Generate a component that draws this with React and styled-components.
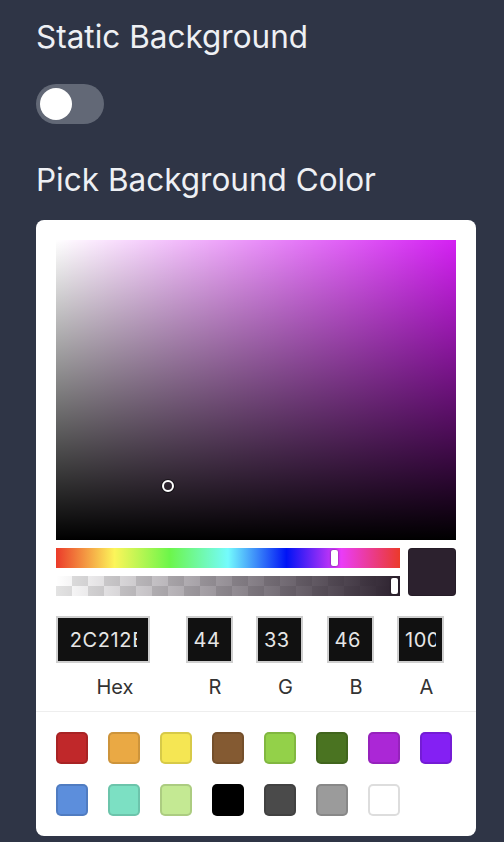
import * as React from 'react'
import styled, { createGlobalStyle } from 'styled-components'

const GlobalStyle = createGlobalStyle`
    html, body {
        margin: 0;
        background-color: #2f3546;
    }
    body {
        font-family: Inter, "Noto Sans", sans-serif;
    }
`;

const Page = styled.div`
    min-height: 842px;
    padding: 19px 28px 0 36px;
    box-sizing: border-box;
    background-color: #2f3546;
`;
const Heading = styled.h3`
    color: #eef0f4;
    font-size: 31.5px;
    font-weight: 400;
    line-height: 36px;
    margin: 0;
    margin-top: ${props => props.gap || 0}px;
`;
const Toggle = styled.div`
    width: 68px;
    height: 40px;
    border-radius: 20px;
    background-color: #626876;
    margin-top: 29px;
    display: flex;
    align-items: center;
    padding: 0 4px;
    box-sizing: border-box;
    justify-content: ${props => props.on ? 'flex-end' : 'flex-start'};
`;
const Knob = styled.div`
    width: 32px;
    height: 32px;
    border-radius: 50%;
    background-color: #fff;
`;

const Card = styled.div`
    margin-top: 22px;
    width: 440px;
    background-color: #fff;
    border-radius: 8px;
    overflow: hidden;
`;
const PickerBody = styled.div`
    padding: 20px 20px 12px;
`;
const Saturation = styled.div`
    position: relative;
    height: 300px;
    background:
        linear-gradient(to top, #000, rgba(0, 0, 0, 0)),
        linear-gradient(to right, #fff, rgba(255, 255, 255, 0)),
        ${props => `hsl(${props.hue}, 90%, 54%)`};
`;
const SatPointer = styled.div`
    position: absolute;
    width: 8px;
    height: 8px;
    border: 2px solid #fff;
    border-radius: 50%;
    box-shadow: 0 0 0 1px rgba(0, 0, 0, 0.5);
    transform: translate(-6px, -6px);
`;
const SliderRow = styled.div`
    display: flex;
    gap: 8px;
    margin-top: 8px;
`;
const Sliders = styled.div`
    flex: 1;
    display: flex;
    flex-direction: column;
    gap: 8px;
`;
const HueBar = styled.div`
    position: relative;
    height: 20px;
    background: linear-gradient(to right,
        #eb3a2a 0%, #fcf55a 17%, #6cf64a 33%, #74fbfd 50%, #0013f5 67%, #ea3cf7 83%, #eb3a2a 100%);
`;
const AlphaBar = styled.div`
    position: relative;
    height: 20px;
    background:
        linear-gradient(to right, rgba(44, 33, 46, 0), rgba(44, 33, 46, 1)),
        conic-gradient(#e3e3e3 25%, #fff 0 50%, #e3e3e3 0 75%, #fff 0) 0 0 / 32px 20px;
`;
const SliderPointer = styled.div`
    position: absolute;
    top: 2px;
    width: 7px;
    height: 16px;
    border-radius: 2px;
    background-color: #fff;
    box-shadow: 0 0 2px rgba(0, 0, 0, 0.6);
    transform: translateX(-3px);
`;
const Preview = styled.div`
    width: 48px;
    height: 48px;
    border-radius: 4px;
    background-color: ${props => props.color};
    box-shadow: inset 0 0 0 1px rgba(0, 0, 0, 0.15);
`;

const Fields = styled.div`
    display: grid;
    grid-template-columns: 2fr 1fr 1fr 1fr 1fr;
    column-gap: 11.5px;
    margin-top: 20px;
`;
const Field = styled.label`
    display: flex;
    flex-direction: column;
    align-items: center;
`;
const FieldInput = styled.input`
    align-self: flex-start;
    width: 80%;
    height: 47px;
    box-sizing: border-box;
    border: 2px solid #cfcfcf;
    background-color: #111;
    color: #e6e6e6;
    font-family: Inter, "Noto Sans", sans-serif;
    font-size: 20px;
    letter-spacing: 0.6px;
    padding: 0 10%;
    outline: none;
    border-radius: 0;
`;
const FieldLabel = styled.span`
    color: #333;
    font-size: 20px;
    line-height: 24px;
    margin-top: 12px;
`;

const Presets = styled.div`
    border-top: 1px solid #eee;
    padding: 20px;
    display: grid;
    grid-template-columns: repeat(8, 32px);
    gap: 20px;
`;
const Swatch = styled.div`
    width: 32px;
    height: 32px;
    border-radius: 5px;
    background-color: ${props => props.color};
    box-shadow: inset 0 0 0 2px ${props => props.color === '#FFFFFF' ? '#dddddd' : 'rgba(0, 0, 0, 0.12)'};
`;

const presetColors = [
    '#C0282A', '#EAA944', '#F5E653', '#845A32', '#93D149', '#4A7321', '#AB27D6', '#8420F3',
    '#5C8EDC', '#7CE0C3', '#C4E993', '#000000', '#4A4A4A', '#9B9B9B', '#FFFFFF'
];

export default function App() {
    const color = { r: 44, g: 33, b: 46, a: 100, hex: '2C212E' };
    const hue = 291;
    const sat = 0.28;
    const val = 46 / 255;
    const fields = [
        { label: 'Hex', value: color.hex },
        { label: 'R', value: color.r },
        { label: 'G', value: color.g },
        { label: 'B', value: color.b },
        { label: 'A', value: color.a }
    ];

    return (
        <Page>
            <GlobalStyle />
            <Heading>Static Background</Heading>
            <Toggle>
                <Knob />
            </Toggle>
            <Heading gap={38}>Pick Background Color</Heading>
            <Card>
                <PickerBody>
                    <Saturation hue={hue}>
                        <SatPointer style={{ left: `${sat * 100}%`, top: `${(1 - val) * 100}%` }} />
                    </Saturation>
                    <SliderRow>
                        <Sliders>
                            <HueBar>
                                <SliderPointer style={{ left: `${hue / 360 * 100}%` }} />
                            </HueBar>
                            <AlphaBar>
                                <SliderPointer style={{ left: 'calc(100% - 6px)' }} />
                            </AlphaBar>
                        </Sliders>
                        <Preview color="#2C212E" />
                    </SliderRow>
                    <Fields>
                        {fields.map(f => (
                            <Field key={f.label}>
                                <FieldInput readOnly value={f.value} />
                                <FieldLabel>{f.label}</FieldLabel>
                            </Field>
                        ))}
                    </Fields>
                </PickerBody>
                <Presets>
                    {presetColors.map(c => <Swatch key={c} color={c} />)}
                </Presets>
            </Card>
        </Page>
    )
}
